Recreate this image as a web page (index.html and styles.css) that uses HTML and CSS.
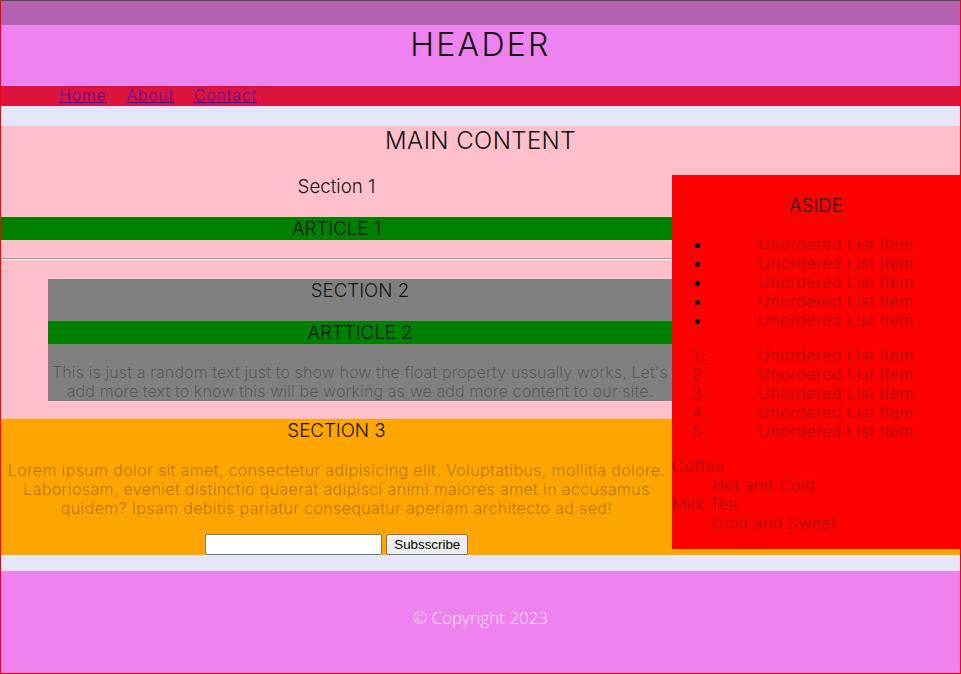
FILE: index.html
```html
<!DOCTYPE html>
<html lang="en">
<head>
<meta charset="utf-8">
<title>Layout</title>
<link rel="stylesheet" href="styles.css">
</head>
<body>
<div class="page">
  <div class="topband"></div>
  <header class="site-header">
    <h1 class="site-title">HEADER</h1>
  </header>
  <nav class="site-nav">
    <a href="#" class="nav-link">Home</a>
    <a href="#" class="nav-link">About</a>
    <a href="#" class="nav-link">Contact</a>
  </nav>
  <div class="band"></div>
  <main class="main">
    <h2 class="main-title">MAIN CONTENT</h2>
    <aside class="aside">
      <h3 class="heading">ASIDE</h3>
      <ul class="aside-list bullets">
        <li>Unordered List Item</li>
        <li>Unordered List Item</li>
        <li>Unordered List Item</li>
        <li>Unordered List Item</li>
        <li>Unordered List Item</li>
      </ul>
      <ol class="aside-list">
        <li>Unordered List Item</li>
        <li>Unordered List Item</li>
        <li>Unordered List Item</li>
        <li>Unordered List Item</li>
        <li>Unordered List Item</li>
      </ol>
      <dl class="aside-dl">
        <dt>Coffee</dt>
        <dd>Hot and Cold</dd>
        <dt>Milk Tea</dt>
        <dd>Cold and Sweet</dd>
      </dl>
    </aside>
    <section class="sec1">
      <h3 class="heading">Section 1</h3>
      <article class="article">
        <h3 class="heading">ARTICLE 1</h3>
      </article>
    </section>
    <hr>
    <section class="sec2">
      <h3 class="heading">SECTION 2</h3>
      <article class="article">
        <h3 class="heading">ARTTICLE 2</h3>
      </article>
      <p class="text text-sec2">This is just a random text just to show how the float property ussually works, Let's add more text to know this will be working as we add more content to our site.</p>
    </section>
    <section class="sec3">
      <h3 class="heading">SECTION 3</h3>
      <p class="text text-sec3">Lorem ipsum dolor sit amet, consectetur adipisicing elit. Voluptatibus, mollitia dolore. Laboriosam, eveniet distinctio quaerat adipisci animi maiores amet in accusamus quidem? Ipsam debitis pariatur consequatur aperiam architecto ad sed!</p>
      <form class="subscribe">
        <input type="text" class="sub-input"> <button type="button" class="sub-btn">Subsscribe</button>
      </form>
    </section>
  </main>
  <div class="band band-low"></div>
  <footer class="site-footer">
    <p class="copy">© Copyright 2023</p>
  </footer>
</div>
</body>
</html>
```
FILE: styles.css
```css
html, body {
  margin: 0;
  padding: 0;
}

body {
  font-family: "Inter", "Liberation Sans", sans-serif;
  font-weight: 300;
  font-size: 16px;
  line-height: 19px;
  color: #000;
  background: #fff;
}

.page {
  width: 961px;
  height: 674px;
  border: 1px solid #ff0000;
  border-top-color: #4b4b4b;
  box-sizing: border-box;
  overflow: hidden;
}

.topband {
  height: 24px;
  background: #b462b0;
}

.site-header {
  height: 61px;
  background: #ee82ee;
  text-align: center;
}

.site-title {
  margin: 0;
  font-size: 32px;
  line-height: 39px;
  font-weight: 300;
  letter-spacing: 2.3px;
  color: #111;
}

.site-nav {
  height: 20px;
  background: #dc143c;
  display: flex;
  gap: 20px;
  padding-left: 58px;
}

.nav-link {
  color: rgba(0, 0, 238, 0.62);
  text-decoration-color: #0000ee;
  line-height: 19px;
  letter-spacing: 0.7px;
}

.band {
  height: 20px;
  background: #e6e6fa;
}

.band-low {
  height: 16px;
}

.main {
  background: #ffc0cb;
  text-align: center;
}

.main-title {
  margin: 0 0 19.92px;
  font-size: 24px;
  line-height: 29px;
  font-weight: 300;
  letter-spacing: 0.4px;
  color: #111;
}

.heading {
  margin: 18.72px 0;
  font-size: 18.72px;
  line-height: 23px;
  font-weight: 300;
  color: #151515;
}

.aside {
  float: right;
  width: 288px;
  background: #ff0000;
}

.aside-list {
  margin: 16px 0;
  padding-left: 40px;
  color: rgba(0, 0, 0, 0.4);
  letter-spacing: 0.5px;
}

.bullets li::marker {
  color: #000;
}

.aside-dl {
  margin: 16px 0;
  text-align: left;
  color: rgba(0, 0, 0, 0.4);
  letter-spacing: 0.5px;
}

.aside-dl dd {
  margin-left: 40px;
}

.article {
  background: #008000;
}

.sec2 {
  margin-left: 47px;
  background: #808080;
}

.text {
  margin: 16px 0;
  color: rgba(0, 0, 0, 0.32);
}

.text-sec2 {
  letter-spacing: 0.1px;
}

.text-sec3 {
  letter-spacing: 0.35px;
}

.sec3 {
  background: #ffa500;
}

.subscribe {
  margin: 0;
}

.sub-input {
  width: 177px;
  height: 21px;
  box-sizing: border-box;
  vertical-align: bottom;
}

.sub-btn {
  font-family: "Liberation Sans", Arial, sans-serif;
  font-size: 13.33px;
  height: 21px;
  vertical-align: bottom;
}

.site-footer {
  height: 102px;
  padding-top: 37px;
  box-sizing: border-box;
  background: #ee82ee;
  text-align: center;
}

.copy {
  margin: 0;
  font-family: "Open Sans", "Noto Sans", sans-serif;
  font-weight: 300;
  font-size: 17px;
  line-height: 19px;
  color: rgba(255, 255, 255, 0.8);
}
```
